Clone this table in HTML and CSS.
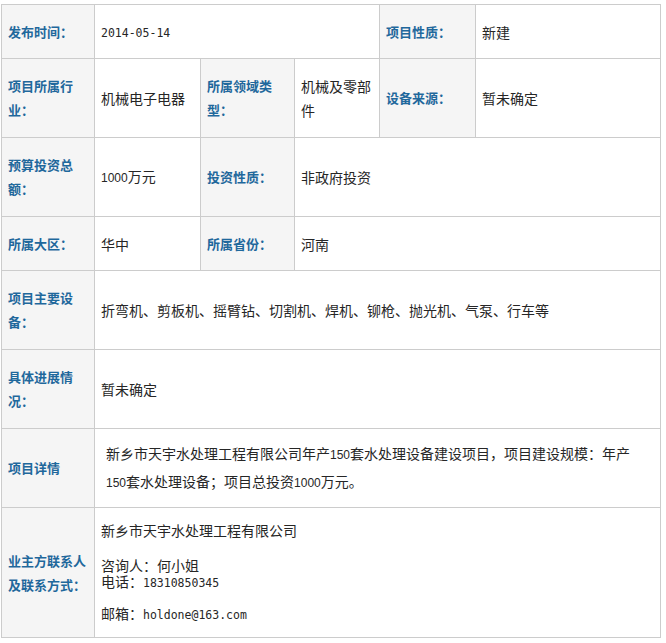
FILE: index.html
```html
<!DOCTYPE html>
<html lang="zh-CN">
<head>
<meta charset="utf-8">
<title>项目信息</title>
<link rel="stylesheet" href="styles.css">
</head>
<body>
<table class="info">
  <colgroup>
    <col class="c1"><col class="c2"><col class="c3"><col class="c4"><col class="c5"><col class="c6">
  </colgroup>
  <tr class="row-s">
    <th>发布时间：</th>
    <td colspan="3"><span class="mono">2014-05-14</span></td>
    <th>项目性质：</th>
    <td>新建</td>
  </tr>
  <tr class="row-t">
    <th>项目所属行业：</th>
    <td>机械电子电器</td>
    <th>所属领域类型：</th>
    <td>机械及零部件</td>
    <th>设备来源：</th>
    <td>暂未确定</td>
  </tr>
  <tr class="row-t">
    <th>预算投资总额：</th>
    <td><span class="num">1000</span>万元</td>
    <th>投资性质：</th>
    <td colspan="3">非政府投资</td>
  </tr>
  <tr class="row-s">
    <th>所属大区：</th>
    <td>华中</td>
    <th>所属省份：</th>
    <td colspan="3">河南</td>
  </tr>
  <tr class="row-t">
    <th>项目主要设备：</th>
    <td colspan="5">折弯机、剪板机、摇臂钻、切割机、焊机、铆枪、抛光机、气泵、行车等</td>
  </tr>
  <tr class="row-t">
    <th>具体进展情况：</th>
    <td colspan="5">暂未确定</td>
  </tr>
  <tr class="row-t">
    <th>项目详情</th>
    <td colspan="5"><p class="detail">新乡市天宇水处理工程有限公司年产<span class="num">150</span>套水处理设备建设项目，项目建设规模：年产<br><span class="num">150</span>套水处理设备；项目总投资<span class="num">1000</span>万元。</p></td>
  </tr>
  <tr class="row-l">
    <th>业主方联系人及联系方式：</th>
    <td colspan="5" class="contact">
      <div class="c-company">新乡市天宇水处理工程有限公司</div>
      <div>咨询人：何小姐</div>
      <div class="c-phone">电话：<span class="mono">18310850345</span></div>
      <div>邮箱：<span class="mono">holdone@163.com</span></div>
    </td>
  </tr>
</table>
</body>
</html>
```
FILE: styles.css
```css
html, body {
  margin: 0;
  padding: 0;
  background: #ffffff;
}

body {
  font-family: "Noto Sans CJK SC", "Liberation Sans", sans-serif;
  color: #262626;
}

.info {
  margin: 4px 0 0 1px;
  width: 660px;
  table-layout: fixed;
  border-collapse: collapse;
  border: 1px solid #cccccc;
}

.c1 { width: 93px; }
.c2 { width: 106px; }
.c3 { width: 94px; }
.c4 { width: 85px; }
.c5 { width: 96px; }
.c6 { width: 185px; }

.info th,
.info td {
  border: 1px solid #cccccc;
  padding: 0 6px;
  vertical-align: middle;
  text-align: left;
}

.info th {
  background: #f5f5f5;
  color: #1f689c;
  font-size: 13px;
  font-weight: bold;
  line-height: 24px;
}

.info td {
  background: #ffffff;
  font-size: 14px;
  line-height: 24px;
  font-weight: normal;
}

.row-s { height: 54px; }
.row-t { height: 79px; }
.row-l { height: 130px; }

.mono {
  font-family: "DejaVu Sans Mono", "Liberation Mono", monospace;
  font-size: 11.5px;
}

.num {
  font-family: "Liberation Sans", sans-serif;
  font-size: 12px;
}

.detail {
  margin: 0;
  padding: 0 5px;
  line-height: 26px;
}

.contact {
  padding-top: 6px;
}

.contact div {
  line-height: 16px;
}

.contact .c-company {
  margin-bottom: 19px;
}

.contact .c-phone {
  margin-bottom: 14px;
}
```
